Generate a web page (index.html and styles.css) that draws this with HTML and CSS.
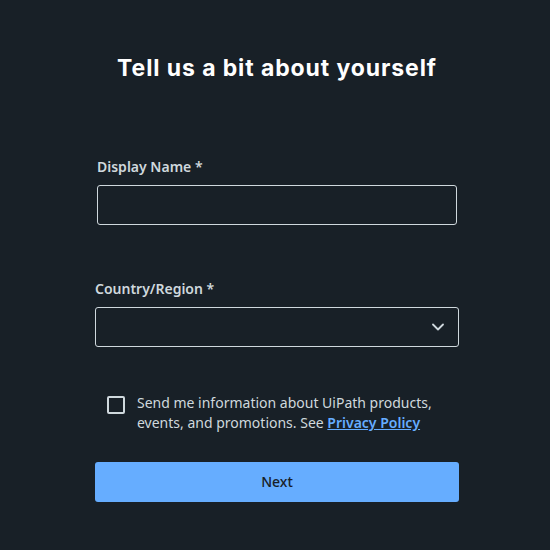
FILE: index.html
```html
<!DOCTYPE html>
<html>
<head>
<meta charset="utf-8">
<link rel="stylesheet" href="styles.css">
</head>
<body>
<main class="form">
  <h1 class="title">Tell us a bit about yourself</h1>
  <div class="field field-name">
    <label class="label">Display Name *</label>
    <div class="input"></div>
  </div>
  <div class="field field-country">
    <label class="label">Country/Region *</label>
    <div class="input select">
      <svg class="chevron" width="12" height="8" viewBox="0 0 12 8"><path d="M1 1.5 L6 6.5 L11 1.5" fill="none" stroke="#cfd8dd" stroke-width="1.8" stroke-linecap="round" stroke-linejoin="round"/></svg>
    </div>
  </div>
  <div class="consent">
    <span class="checkbox"></span>
    <p class="consent-text">Send me information about UiPath products, events, and promotions. See <a class="link" href="#">Privacy Policy</a></p>
  </div>
  <button class="next">Next</button>
</main>
</body>
</html>
```
FILE: styles.css
```css
html, body {
  margin: 0;
  background: #182027;
}
body {
  padding-left: 4px;
  font-family: "Noto Sans", "Open Sans", sans-serif;
  color: #cfd8dd;
}
.form {
  width: 364px;
  margin: 0 auto;
  display: flex;
  flex-direction: column;
}
.title {
  margin: 53px 0 0;
  font-family: Inter, "Noto Sans", sans-serif;
  font-weight: 700;
  font-size: 23px;
  line-height: 30px;
  text-align: center;
  color: #ffffff;
  letter-spacing: 0.9px;
}
.field {
  display: flex;
  flex-direction: column;
  gap: 8px;
}
.field-name {
  margin-top: 74px;
  padding: 0 2px;
}
.field-country {
  margin-top: 54px;
}
.label {
  font-size: 14px;
  font-weight: 600;
  line-height: 20px;
  color: #cfd8dd;
}
.input {
  height: 40px;
  box-sizing: border-box;
  border: 1px solid #cfd8dd;
  border-radius: 3px;
  background: #182027;
}
.select {
  display: flex;
  align-items: center;
  justify-content: flex-end;
  padding-right: 14px;
}
.consent {
  margin-top: 46px;
  display: flex;
  align-items: flex-start;
  gap: 12px;
  padding-left: 12px;
}
.checkbox {
  flex: none;
  width: 18px;
  height: 18px;
  box-sizing: border-box;
  border: 2px solid #cfd8dd;
  border-radius: 2px;
  margin-top: 3px;
}
.consent-text {
  margin: 0;
  font-size: 14px;
  line-height: 20px;
  color: #cfd8dd;
}
.link {
  color: #66adff;
  font-weight: 600;
  text-decoration: underline;
}
.next {
  margin-top: 29px;
  height: 40px;
  padding: 0 0 2px;
  border: none;
  border-radius: 3px;
  background: #66adff;
  color: #182027;
  font-family: "Noto Sans", sans-serif;
  font-size: 14px;
  font-weight: 500;
}
```
